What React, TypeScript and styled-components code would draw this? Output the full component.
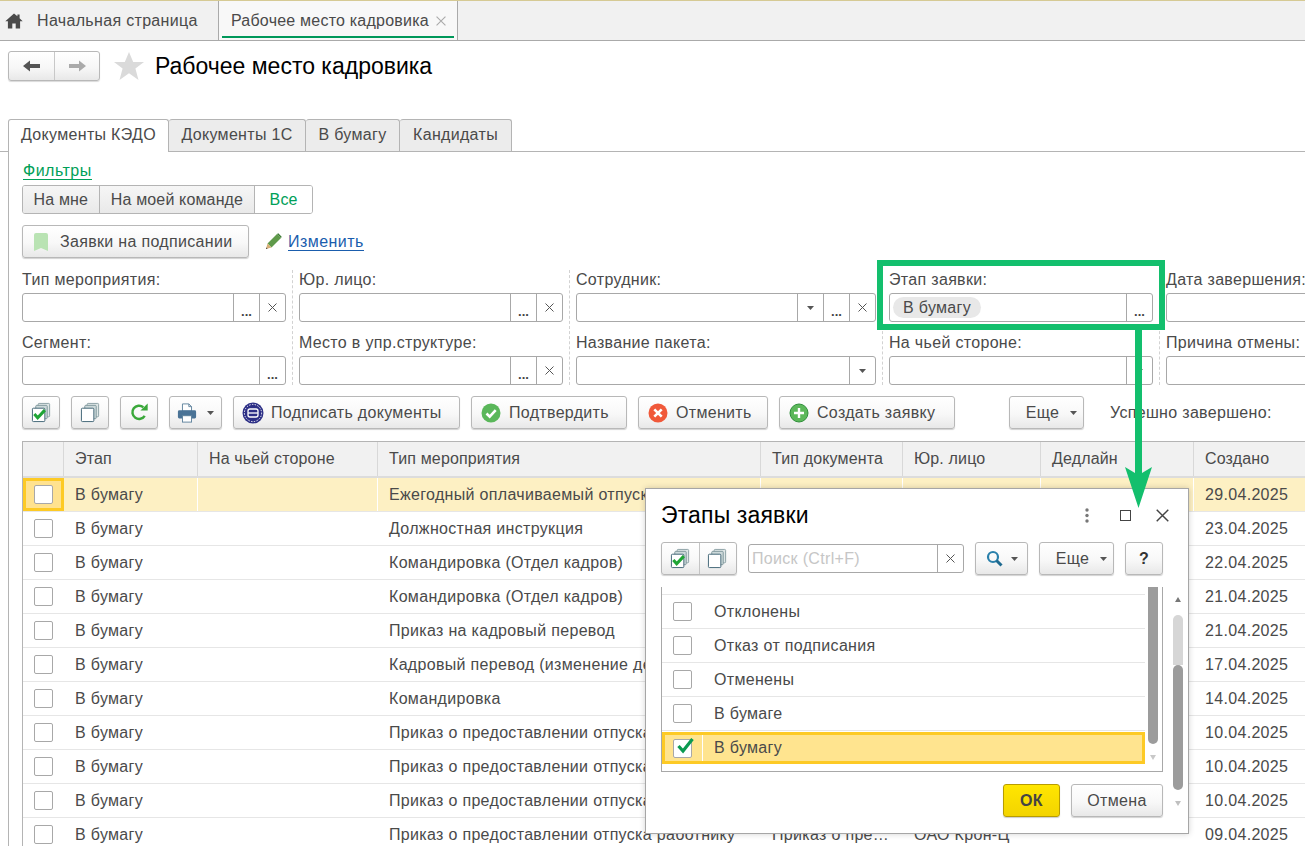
import React from "react";
import styled, { createGlobalStyle } from "styled-components";

const Global = createGlobalStyle`
  html, body { margin: 0; padding: 0; background: #fff; }
  * { box-sizing: border-box; }
  body { font-family: "Liberation Sans", Arial, sans-serif; font-size: 16px; color: #4a4a4a; letter-spacing: 0.32px; }
`;

const Page = styled.div`
  position: relative;
  width: 1305px;
  height: 846px;
  overflow: hidden;
  background: #fff;
`;

/* ---------- top bar ---------- */
const TopBar = styled.div`
  display: flex;
  height: 41px;
  background: #f1f1f1;
  border-top: 1px solid #d6ca94;
  border-bottom: 1px solid #aaa;
`;
const TopTab = styled.div<{ $active?: boolean }>`
  display: flex;
  align-items: center;
  position: relative;
  height: 39px;
  width: ${(p) => (p.$active ? "239px" : "219px")};
  padding-left: ${(p) => (p.$active ? "12px" : "5px")};
  gap: ${(p) => (p.$active ? "7px" : "14px")};
  background: ${(p) => (p.$active ? "#f8f8f8" : "transparent")};
  border-right: 1px solid #aaa;
  font-size: 16px;
  color: #4a4a4a;
  white-space: nowrap;
  letter-spacing: ${(p) => (p.$active ? "0.22px" : "0.33px")};
`;
const TabUnderline = styled.span`
  position: absolute;
  left: 3px;
  right: 3px;
  bottom: 2px;
  height: 2px;
  background: #00985a;
`;

/* ---------- header ---------- */
const Header = styled.div`
  display: flex;
  align-items: flex-start;
  height: 78px;
  padding: 10px 0 0 8px;
`;
const NavGroup = styled.div`
  display: flex;
  width: 92px;
  height: 30px;
  border: 1px solid #b8b8b8;
  border-radius: 3px;
  background: linear-gradient(#fff, #f6f6f6 60%, #e8e8e8);
  box-shadow: 0 1px 1px rgba(0, 0, 0, 0.15);
`;
const NavBtn = styled.div<{ $first?: boolean }>`
  display: flex;
  align-items: center;
  justify-content: center;
  width: ${(p) => (p.$first ? "46px" : "44px")};
  border-right: ${(p) => (p.$first ? "1px solid #c8c8c8" : "none")};
`;
const StarWrap = styled.div`
  margin: 1px 0 0 14px;
  height: 30px;
`;
const Title = styled.h1`
  margin: 0 0 0 11px;
  font-size: 23px;
  font-weight: 400;
  line-height: 30px;
  letter-spacing: 0;
  color: #000;
  white-space: nowrap;
`;

/* ---------- form tabs ---------- */
const FormTabs = styled.div`
  display: flex;
  height: 33px;
  padding-left: 8px;
  border-bottom: 1px solid #b4b4b4;
`;
const FormTab = styled.div<{ $w: number; $active?: boolean }>`
  display: flex;
  align-items: center;
  justify-content: center;
  width: ${(p) => p.$w}px;
  height: ${(p) => (p.$active ? "33px" : "32px")};
  padding-bottom: 2px;
  border: 1px solid #b4b4b4;
  border-left-width: ${(p) => (p.$active ? "1px" : "0")};
  border-bottom: none;
  border-radius: 3px 3px 0 0;
  background: ${(p) => (p.$active ? "#fff" : "#ececec")};
  font-size: 16px;
  color: #4a4a4a;
  white-space: nowrap;
  z-index: ${(p) => (p.$active ? 1 : 0)};
`;

const Panel = styled.div`
  margin-left: 8px;
  padding-left: 13px;
  border-left: 1px solid #b4b4b4;
  height: 694px;
  overflow: hidden;
`;
const FilterLink = styled.a`
  display: block;
  width: max-content;
  margin: 10px 0 0 1px;
  height: 18px;
  line-height: 17px;
  font-size: 16px;
  letter-spacing: 0.5px;
  color: #00a058;
  border-bottom: 1px solid #00a058;
`;
const Segmented = styled.div`
  display: flex;
  width: 291px;
  height: 29px;
  margin-top: 5px;
  border: 1px solid #b4b4b4;
  border-radius: 3px;
  overflow: hidden;
`;
const Seg = styled.div<{ $w: number; $on?: boolean }>`
  display: flex;
  align-items: center;
  justify-content: center;
  width: ${(p) => p.$w}px;
  font-size: 16px;
  letter-spacing: 0.15px;
  color: ${(p) => (p.$on ? "#00a058" : "#4a4a4a")};
  background: ${(p) => (p.$on ? "#fff" : "linear-gradient(#f6f6f6, #e9e9e9)")};
  border-right: ${(p) => (p.$on ? "none" : "1px solid #b4b4b4")};
`;
const ActionRow = styled.div`
  display: flex;
  align-items: center;
  margin-top: 11px;
  height: 33px;
`;
const Btn = styled.div<{ $w: number; $pl?: number; $gap?: number }>`
  flex: none;
  display: flex;
  align-items: center;
  gap: ${(p) => p.$gap ?? 8}px;
  justify-content: ${(p) => (p.$w > 100 ? "flex-start" : "center")};
  width: ${(p) => p.$w}px;
  height: 33px;
  padding-left: ${(p) => (p.$w > 100 ? p.$pl ?? 9 : 0)}px;
  border: 1px solid #b8b8b8;
  border-radius: 3px;
  background: linear-gradient(#fff, #f8f8f8 55%, #e8e8e8);
  box-shadow: 0 1px 1px rgba(0, 0, 0, 0.18);
  font-size: 16px;
  color: #4a4a4a;
  white-space: nowrap;
`;
const MoreBtn = styled(Btn)`
  gap: 11px;
  padding-left: 10px;
`;
const HelpBtn = styled(Btn)`
  font-weight: 700;
  color: #333;
`;
const EditLink = styled.a`
  margin-left: 6px;
  font-size: 16px;
  line-height: 17px;
  letter-spacing: 0.45px;
  color: #1a5dad;
  border-bottom: 1px solid #1a5dad;
`;
const PencilWrap = styled.span`
  display: flex;
  margin-left: 16px;
`;

/* ---------- filter fields ---------- */
const FilterGrid = styled.div`
  display: grid;
  grid-template-columns: 271px 277px 313px 277px 220px;
  width: 1360px;
  margin-top: 12px;
`;
const FilterCol = styled.div<{ $first?: boolean; $last?: boolean }>`
  display: flex;
  flex-direction: column;
  gap: 11px;
  padding: 0 6px 0 ${(p) => (p.$first ? "0" : "6px")};
  border-right: ${(p) => (p.$last ? "none" : "1px dashed #d2d2d2")};
`;
const Field = styled.div`
  display: flex;
  flex-direction: column;
  gap: 5px;
`;
const Label = styled.div`
  height: 18px;
  line-height: 20px;
  font-size: 16px;
  color: #4a4a4a;
  white-space: nowrap;
`;
const InputBox = styled.div`
  display: flex;
  height: 29px;
  border: 1px solid #a8a8a8;
  border-radius: 3px;
  background: #fff;
`;
const InputBody = styled.div`
  flex: 1;
  display: flex;
  align-items: center;
  padding-left: 3px;
  min-width: 0;
  font-size: 16px;
  color: #c6c6c6;
`;
const Addon = styled.div<{ $dots?: boolean }>`
  flex: none;
  display: flex;
  align-items: center;
  justify-content: center;
  width: 26px;
  border-left: 1px solid #a8a8a8;
  padding-top: ${(p) => (p.$dots ? "7px" : "0")};
  font-size: 13px;
  letter-spacing: 0;
  font-weight: 700;
  color: #444;
`;
const Chip = styled.span`
  display: flex;
  align-items: center;
  height: 21px;
  padding: 0 10px;
  border-radius: 11px;
  background: #e8e8e8;
  font-size: 16px;
  color: #4a4a4a;
`;

/* ---------- toolbar ---------- */
const Toolbar = styled.div`
  display: flex;
  align-items: center;
  gap: 11px;
  height: 33px;
  margin-top: 11px;
  white-space: nowrap;
`;
const ToolSpacer = styled.div`
  width: 32px;
  flex: none;
`;
const ToolLabel = styled.div`
  margin-left: 15px;
  font-size: 16px;
  color: #4a4a4a;
`;

/* ---------- table ---------- */
const Grid = styled.div`
  width: 1320px;
  margin-top: 12px;
  border-top: 1px solid #b4b4b4;
  border-left: 1px solid #b4b4b4;
`;
const cols = "41px 134px 180px 383px 142px 138px 153px 128px";
const HeadRow = styled.div`
  display: grid;
  grid-template-columns: ${cols};
  height: 36px;
  background: #f1f1f1;
  border-bottom: 2px solid #dcdcdc;
`;
const HeadCell = styled.div`
  display: flex;
  align-items: center;
  padding-left: 11px;
  font-size: 16px;
  letter-spacing: 0.15px;
  color: #4a4a4a;
  border-right: 1px solid #d8d8d8;
  white-space: nowrap;
`;
const Row = styled.div<{ $hl?: boolean }>`
  display: grid;
  grid-template-columns: ${cols};
  height: 34px;
  background: ${(p) => (p.$hl ? "#fdf0c3" : "#fff")};
  border-bottom: 1px solid #e6e6e6;
`;
const Cell = styled.div<{ $hl?: boolean }>`
  display: flex;
  align-items: center;
  padding-left: 11px;
  font-size: 16px;
  color: #4a4a4a;
  white-space: nowrap;
  overflow: hidden;
  border-right: ${(p) => (p.$hl ? "1px solid #fff" : "none")};
`;
const CheckCell = styled.div<{ $hl?: boolean }>`
  display: flex;
  align-items: center;
  justify-content: center;
  background: ${(p) => (p.$hl ? "#ffe28f" : "transparent")};
  border: ${(p) => (p.$hl ? "3px solid #fdca25" : "none")};
`;
const CheckBox = styled.div`
  position: relative;
  flex: none;
  width: 19px;
  height: 19px;
  border: 1px solid #a8a8a8;
  border-radius: 2px;
  background: #fff;
`;

/* ---------- annotation ---------- */
const Frame = styled.div`
  position: absolute;
  left: 877px;
  top: 260px;
  width: 288px;
  height: 70px;
  border: 6px solid #13bf6d;
  z-index: 3;
`;
const ArrowSvg = styled.svg`
  position: absolute;
  left: 1120px;
  top: 330px;
  z-index: 3;
`;

/* ---------- dialog ---------- */
const Dialog = styled.div`
  position: absolute;
  left: 645px;
  top: 488px;
  width: 544px;
  height: 346px;
  display: flex;
  background: #fff;
  border: 1px solid #a6a6a6;
  box-shadow: 0 0 6px rgba(0, 0, 0, 0.18);
  z-index: 2;
`;
const DialogMain = styled.div`
  width: 518px;
  padding-left: 15px;
  flex: none;
`;
const DialogTitleRow = styled.div`
  display: flex;
  align-items: center;
  height: 52px;
`;
const DialogTitle = styled.div`
  flex: 1;
  font-size: 23px;
  letter-spacing: 0.15px;
  color: #000;
  white-space: nowrap;
`;
const WinBtns = styled.div`
  display: flex;
  align-items: center;
  margin-right: -16px;
`;
const WinBtn = styled.div<{ $w: number }>`
  display: flex;
  justify-content: center;
  align-items: center;
  width: ${(p) => p.$w}px;
`;
const DialogBar = styled.div`
  display: flex;
  align-items: center;
  margin-top: 1px;
  height: 33px;
`;
const BtnGroup = styled.div`
  display: flex;
  width: 76px;
  height: 33px;
  border: 1px solid #b8b8b8;
  border-radius: 3px;
  background: linear-gradient(#fff, #f8f8f8 55%, #e8e8e8);
  box-shadow: 0 1px 1px rgba(0, 0, 0, 0.18);
`;
const GroupBtn = styled.div<{ $first?: boolean }>`
  flex: 1;
  display: flex;
  align-items: center;
  justify-content: center;
  border-right: ${(p) => (p.$first ? "1px solid #c4c4c4" : "none")};
`;
const SearchBox = styled(InputBox)`
  width: 216px;
  margin: 0 11px;
`;
const SmallGap = styled.div`
  width: 11px;
  flex: none;
`;
const List = styled.div`
  display: flex;
  width: 502px;
  height: 185px;
  margin-top: 12px;
  border: 1px solid #a8a8a8;
  border-top: none;
`;
const ListRows = styled.div`
  width: 483px;
  flex: none;
`;
const ListSpacer = styled.div`
  height: 8px;
  border-bottom: 1px solid #e6e6e6;
`;
const ListRow = styled.div<{ $sel?: boolean }>`
  display: flex;
  align-items: stretch;
  height: ${(p) => (p.$sel ? "32px" : "34px")};
  margin-top: ${(p) => (p.$sel ? "1px" : "0")};
  background: ${(p) => (p.$sel ? "#ffe48f" : "#fff")};
  border: ${(p) => (p.$sel ? "3px solid #fdca25" : "none")};
  border-bottom: ${(p) => (p.$sel ? "3px solid #fdca25" : "1px solid #e6e6e6")};
`;
const ListCheck = styled.div<{ $sel?: boolean }>`
  display: flex;
  align-items: center;
  width: ${(p) => (p.$sel ? "38px" : "41px")};
  padding-left: ${(p) => (p.$sel ? "8px" : "11px")};
  border-right: ${(p) => (p.$sel ? "1px solid #fff" : "none")};
`;
const ListText = styled.div`
  display: flex;
  align-items: center;
  padding-left: 11px;
  font-size: 16px;
  color: #4a4a4a;
`;
const ListScroll = styled.div`
  flex: 1;
  display: flex;
  flex-direction: column;
  justify-content: space-between;
  padding: 0 0 11px 3px;
`;
const Thumb = styled.div`
  width: 10px;
  height: 157px;
  background: #9c9c9c;
  border-radius: 0 0 5px 5px;
`;
const ArrowDown = styled.div<{ $c?: string }>`
  align-self: flex-start;
  margin-left: 2px;
  width: 0;
  height: 0;
  border-left: 3px solid transparent;
  border-right: 3px solid transparent;
  border-top: 5px solid ${(p) => p.$c || "#c8c8c8"};
`;
const ArrowUp = styled.div`
  margin-left: 2px;
  width: 0;
  height: 0;
  border-left: 3px solid transparent;
  border-right: 3px solid transparent;
  border-bottom: 5px solid #777;
`;
const Footer = styled.div`
  display: flex;
  justify-content: flex-end;
  gap: 11px;
  width: 502px;
  margin-top: 12px;
`;
const OkBtn = styled.div`
  display: flex;
  align-items: center;
  justify-content: center;
  width: 57px;
  height: 33px;
  border: 1px solid #b89c00;
  border-radius: 3px;
  background: linear-gradient(#ffe600, #f3d400);
  box-shadow: 0 1px 1px rgba(0, 0, 0, 0.2);
  font-size: 16px;
  font-weight: 700;
  color: #444;
`;
const CancelBtn = styled(Btn)`
  justify-content: center;
  padding-left: 0;
`;
const OuterScroll = styled.div`
  width: 10px;
  margin-left: 9px;
  padding-top: 108px;
  display: flex;
  flex-direction: column;
`;
const OuterLight = styled.div`
  margin-top: 13px;
  height: 50px;
  background: #d6d6d6;
  border-radius: 5px 5px 0 0;
`;
const OuterDark = styled.div`
  height: 125px;
  background: #9c9c9c;
  border-radius: 5px;
  margin-bottom: 11px;
`;

/* ---------- icons ---------- */
const Caret = () => (
  <svg width="7" height="4" viewBox="0 0 7 4"><path d="M0 0h7L3.5 4z" fill="#555" /></svg>
);
const Cross = ({ s = 9, c = "#555" }: { s?: number; c?: string }) => (
  <svg width={s} height={s} viewBox="0 0 9 9"><path d="M.5.5l8 8M8.5.5l-8 8" stroke={c} strokeWidth="1" fill="none" /></svg>
);
const Home = () => (
  <svg width="18" height="16" viewBox="0 0 18 16"><path d="M9 .5L.3 8.2h2.600V15.500h4.400v-5h3.400v5h4.400V8.200h2.600L14.600 5.200V1.500h-2.200v1.800z" fill="#4a4a4a" /></svg>
);
const NavArrow = ({ c, flip }: { c: string; flip?: boolean }) => (
  <svg width="17" height="12" viewBox="0 0 17 12" style={flip ? { transform: "scaleX(-1)" } : undefined}>
    <path d="M0 6l7-5.500V4h10v4H7v3.500z" fill={c} />
  </svg>
);
const Star = () => (
  <svg width="30" height="28" viewBox="0 0 30 28"><path d="M15 0l4.200 10H30l-8.600 6.600L24.500 28 15 21.200 5.500 28l3.100-11.400L0 10h10.800z" fill="#dadada" /></svg>
);
const Bookmark = () => (
  <svg width="14" height="18" viewBox="0 0 14 18"><path d="M2 0h10a2 2 0 012 2v16l-7-3-7 3V2a2 2 0 012-2z" fill="#b9e3b3" /></svg>
);
const Pencil = () => (
  <svg width="17" height="17" viewBox="0 0 17 17">
    <path d="M12 1l4 4-9.500 9.500-4-4z" fill="#5f9a4a" />
    <path d="M2.500 10.500l4 4L1 16z" fill="#d8b078" />
    <path d="M1 16l1.600-.4-1.200-1.200z" fill="#333" />
    <path d="M12 1l1.300-.7 3.400 3.400L16 5z" fill="#3d7a34" />
  </svg>
);
const Stack = ({ check }: { check?: boolean }) => (
  <svg width="21" height="21" viewBox="0 0 22 22">
    <rect x="7.500" y="1.500" width="12" height="14" rx="1" fill="#dfe7e7" stroke="#8aa0a4" />
    <rect x="5" y="3.500" width="12" height="14" rx="1" fill="#cdd9da" stroke="#7f979c" />
    <rect x="1.500" y="6.500" width="13" height="14" rx="1" fill="#fff" stroke="#3f6474" />
    {check && <path d="M3.500 12.500l3.500 4 7.500-8" stroke="#1ea535" strokeWidth="3.200" fill="none" />}
  </svg>
);
const Refresh = () => (
  <svg width="19" height="19" viewBox="0 0 20 20">
    <path d="M15.500 13.500A7 7 0 1 1 14 4.400" stroke="#3aa83a" strokeWidth="2.600" fill="none" />
    <path d="M11 7.800h7.600V.4z" fill="#3aa83a" />
  </svg>
);
const Printer = () => (
  <svg width="20" height="20" viewBox="0 0 22 22">
    <path d="M6 1h7l3 3v5H6z" fill="#fff" stroke="#5b7f9a" />
    <path d="M13 1v3h3" fill="none" stroke="#5b7f9a" />
    <rect x="1" y="8" width="20" height="9" rx="1.500" fill="#4a7396" />
    <rect x="6" y="14" width="10" height="7" fill="#fff" stroke="#5b7f9a" />
  </svg>
);
const SignIcon = () => (
  <svg width="22" height="22" viewBox="0 0 22 22">
    <circle cx="11" cy="11" r="10.500" fill="#2c2f86" />
    <circle cx="11" cy="11" r="8.600" fill="none" stroke="#fff" strokeWidth="1" strokeDasharray="1.400 1.400" />
    <rect x="6" y="7" width="10" height="8" rx="2" fill="none" stroke="#fff" strokeWidth="1.300" />
    <path d="M6 11h10" stroke="#fff" strokeWidth="1.300" />
  </svg>
);
const OkCircle = () => (
  <svg width="20" height="20" viewBox="0 0 20 20">
    <circle cx="10" cy="10" r="9.500" fill="#5ab75a" />
    <path d="M5.500 10.500l3.200 3.200 6-6.500" stroke="#fff" strokeWidth="2.600" fill="none" />
  </svg>
);
const XCircle = () => (
  <svg width="20" height="20" viewBox="0 0 20 20">
    <circle cx="10" cy="10" r="9.500" fill="#f0593a" />
    <path d="M6.300 6.300l7.400 7.400M13.700 6.300l-7.400 7.400" stroke="#fff" strokeWidth="2.600" />
  </svg>
);
const PlusCircle = () => (
  <svg width="20" height="20" viewBox="0 0 20 20">
    <circle cx="10" cy="10" r="9" fill="#5cb85a" stroke="#2f8f3a" />
    <path d="M10 5v10M5 10h10" stroke="#fff" strokeWidth="2.400" />
  </svg>
);
const Magnifier = () => (
  <svg width="17" height="17" viewBox="0 0 17 17">
    <circle cx="7" cy="7" r="5" fill="none" stroke="#2a80ab" strokeWidth="2.200" />
    <path d="M10.500 10.500l5 5" stroke="#1f6a90" strokeWidth="3" />
  </svg>
);
const Dots = () => (
  <svg width="4" height="15" viewBox="0 0 4 15"><g fill="#777"><circle cx="2" cy="2" r="1.700" /><circle cx="2" cy="7.500" r="1.700" /><circle cx="2" cy="13" r="1.700" /></g></svg>
);
const Tick = () => (
  <svg width="20" height="17" viewBox="0 0 20 17" style={{ position: "absolute", left: 2, top: -3 }}>
    <path d="M2.500 9l4.500 5L16.500 2" stroke="#0a9a50" strokeWidth="3.200" fill="none" />
  </svg>
);

/* ---------- data ---------- */
const rows = [
  ["Ежегодный оплачиваемый отпуск", "29.04.2025"],
  ["Должностная инструкция", "23.04.2025"],
  ["Командировка (Отдел кадров)", "22.04.2025"],
  ["Командировка (Отдел кадров)", "21.04.2025"],
  ["Приказ на кадровый перевод", "21.04.2025"],
  ["Кадровый перевод (изменение де", "17.04.2025"],
  ["Командировка", "14.04.2025"],
  ["Приказ о предоставлении отпуска работнику", "10.04.2025"],
  ["Приказ о предоставлении отпуска работнику", "10.04.2025"],
  ["Приказ о предоставлении отпуска работнику", "10.04.2025"],
  ["Приказ о предоставлении отпуска работнику", "09.04.2025"],
];

type FieldDef = { label: string; addons: ("caret" | "dots" | "x")[]; chip?: string };
const filterCols: FieldDef[][] = [
  [
    { label: "Тип мероприятия:", addons: ["dots", "x"] },
    { label: "Сегмент:", addons: ["dots"] },
  ],
  [
    { label: "Юр. лицо:", addons: ["dots", "x"] },
    { label: "Место в упр.структуре:", addons: ["dots", "x"] },
  ],
  [
    { label: "Сотрудник:", addons: ["caret", "dots", "x"] },
    { label: "Название пакета:", addons: ["caret"] },
  ],
  [
    { label: "Этап заявки:", addons: ["dots"], chip: "В бумагу" },
    { label: "На чьей стороне:", addons: ["caret"] },
  ],
  [
    { label: "Дата завершения:", addons: [] },
    { label: "Причина отмены:", addons: [] },
  ],
];

const listItems = ["Отклонены", "Отказ от подписания", "Отменены", "В бумаге"];

export default function App() {
  return (
    <Page>
      <Global />
      <TopBar>
        <TopTab>
          <Home />
          Начальная страница
        </TopTab>
        <TopTab $active>
          Рабочее место кадровика
          <Cross s={10} c="#aaa" />
          <TabUnderline />
        </TopTab>
      </TopBar>

      <Header>
        <NavGroup>
          <NavBtn $first><NavArrow c="#555" /></NavBtn>
          <NavBtn><NavArrow c="#aaa" flip /></NavBtn>
        </NavGroup>
        <StarWrap><Star /></StarWrap>
        <Title>Рабочее место кадровика</Title>
      </Header>

      <FormTabs>
        <FormTab $w={161} $active>Документы КЭДО</FormTab>
        <FormTab $w={137}>Документы 1С</FormTab>
        <FormTab $w={94}>В бумагу</FormTab>
        <FormTab $w={112}>Кандидаты</FormTab>
      </FormTabs>

      <Panel>
        <FilterLink>Фильтры</FilterLink>
        <Segmented>
          <Seg $w={77}>На мне</Seg>
          <Seg $w={156}>На моей команде</Seg>
          <Seg $w={57} $on>Все</Seg>
        </Segmented>
        <ActionRow>
          <Btn $w={227} $pl={11} $gap={12}><Bookmark />Заявки на подписании</Btn>
          <PencilWrap><Pencil /></PencilWrap>
          <EditLink>Изменить</EditLink>
        </ActionRow>

        <FilterGrid>
          {filterCols.map((col, i) => (
            <FilterCol key={i} $first={i === 0} $last={i === 4}>
              {col.map((f) => (
                <Field key={f.label}>
                  <Label>{f.label}</Label>
                  <InputBox>
                    <InputBody>{f.chip && <Chip>{f.chip}</Chip>}</InputBody>
                    {f.addons.map((a) => (
                      <Addon key={a} $dots={a === "dots"}>
                        {a === "dots" ? "..." : a === "x" ? <Cross /> : <Caret />}
                      </Addon>
                    ))}
                  </InputBox>
                </Field>
              ))}
            </FilterCol>
          ))}
        </FilterGrid>

        <Toolbar>
          <Btn $w={38}><Stack check /></Btn>
          <Btn $w={38}><Stack /></Btn>
          <Btn $w={38}><Refresh /></Btn>
          <Btn $w={53} $gap={10}><Printer /><Caret /></Btn>
          <Btn $w={227} $pl={8} $gap={7}><SignIcon />Подписать документы</Btn>
          <Btn $w={156}><OkCircle />Подтвердить</Btn>
          <Btn $w={130}><XCircle />Отменить</Btn>
          <Btn $w={176}><PlusCircle />Создать заявку</Btn>
          <ToolSpacer />
          <MoreBtn $w={75}>Еще<Caret /></MoreBtn>
          <ToolLabel>Успешно завершено:</ToolLabel>
        </Toolbar>

        <Grid>
          <HeadRow>
            <HeadCell />
            <HeadCell>Этап</HeadCell>
            <HeadCell>На чьей стороне</HeadCell>
            <HeadCell>Тип мероприятия</HeadCell>
            <HeadCell>Тип документа</HeadCell>
            <HeadCell>Юр. лицо</HeadCell>
            <HeadCell>Дедлайн</HeadCell>
            <HeadCell>Создано</HeadCell>
          </HeadRow>
          {rows.map(([type, date], i) => {
            const hl = i === 0;
            const last = i === rows.length - 1;
            return (
              <Row key={i} $hl={hl}>
                <CheckCell $hl={hl}><CheckBox /></CheckCell>
                <Cell $hl={hl}>В бумагу</Cell>
                <Cell $hl={hl} />
                <Cell $hl={hl}>{type}</Cell>
                <Cell $hl={hl}>{last ? "Приказ о пре…" : ""}</Cell>
                <Cell $hl={hl}>{last ? "ОАО Крон-Ц" : ""}</Cell>
                <Cell $hl={hl} />
                <Cell>{date}</Cell>
              </Row>
            );
          })}
        </Grid>
      </Panel>

      <Frame />
      <ArrowSvg width="40" height="182" viewBox="0 0 40 182">
        <path d="M15 0h7v143l10-6-13.500 41L5 137l10 6z" fill="#13bf6d" />
      </ArrowSvg>

      <Dialog>
        <DialogMain>
          <DialogTitleRow>
            <DialogTitle>Этапы заявки</DialogTitle>
            <WinBtns>
              <WinBtn $w={38}><Dots /></WinBtn>
              <WinBtn $w={38}>
                <svg width="11" height="11" viewBox="0 0 11 11"><rect x=".5" y=".5" width="10" height="10" fill="none" stroke="#444" /></svg>
              </WinBtn>
              <WinBtn $w={36}><Cross s={13} c="#444" /></WinBtn>
            </WinBtns>
          </DialogTitleRow>
          <DialogBar>
            <BtnGroup>
              <GroupBtn $first><Stack check /></GroupBtn>
              <GroupBtn><Stack /></GroupBtn>
            </BtnGroup>
            <SearchBox>
              <InputBody>Поиск (Ctrl+F)</InputBody>
              <Addon><Cross /></Addon>
            </SearchBox>
            <Btn $w={53}><Magnifier /><Caret /></Btn>
            <SmallGap />
            <MoreBtn $w={75}>Еще<Caret /></MoreBtn>
            <SmallGap />
            <HelpBtn $w={38}>?</HelpBtn>
          </DialogBar>
          <List>
            <ListRows>
              <ListSpacer />
              {listItems.map((t) => (
                <ListRow key={t}>
                  <ListCheck><CheckBox /></ListCheck>
                  <ListText>{t}</ListText>
                </ListRow>
              ))}
              <ListRow $sel>
                <ListCheck $sel><CheckBox><Tick /></CheckBox></ListCheck>
                <ListText>В бумагу</ListText>
              </ListRow>
            </ListRows>
            <ListScroll>
              <Thumb />
              <ArrowDown />
            </ListScroll>
          </List>
          <Footer>
            <OkBtn>ОК</OkBtn>
            <CancelBtn $w={92}>Отмена</CancelBtn>
          </Footer>
        </DialogMain>
        <OuterScroll>
          <ArrowUp />
          <OuterLight />
          <OuterDark />
          <ArrowDown $c="#c0c0c0" />
        </OuterScroll>
      </Dialog>
    </Page>
  );
}
